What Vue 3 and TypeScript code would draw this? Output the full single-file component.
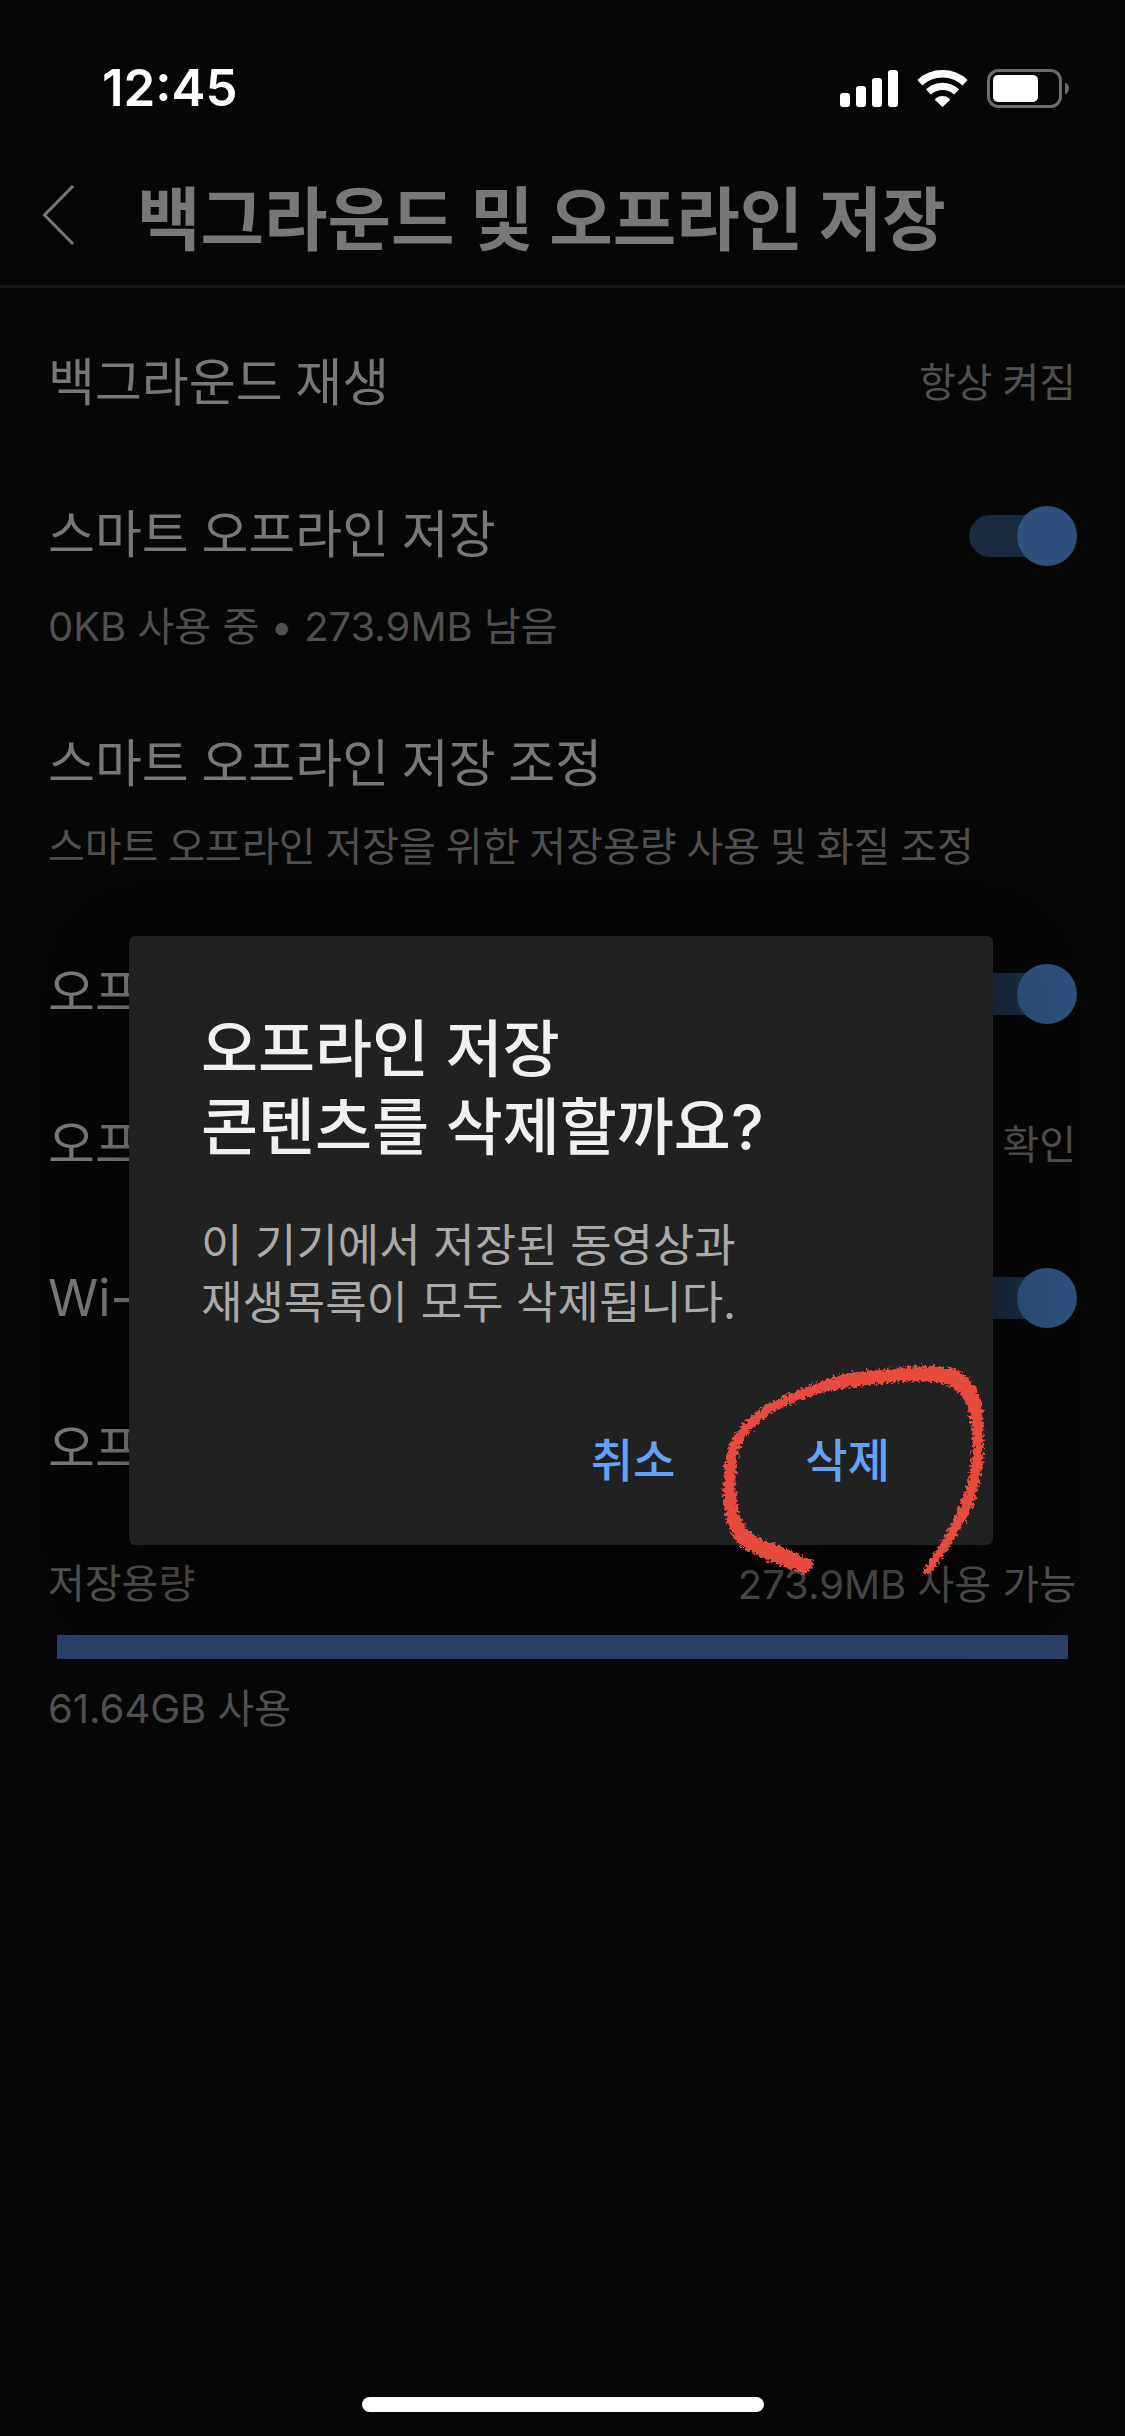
<script setup lang="ts">
import { ref } from 'vue'

interface SettingRow {
  id: string
  title: string
  value?: string
  toggle?: boolean
  detail?: string
  mixed?: boolean
  tight?: boolean
}

const rows = ref<SettingRow[]>([
  { id: 'background', title: '백그라운드 재생', value: '항상 켜짐' },
  {
    id: 'smart',
    title: '스마트 오프라인 저장',
    toggle: true,
    detail: '0KB 사용 중 • 273.9MB 남음',
    mixed: true,
  },
  {
    id: 'adjust',
    title: '스마트 오프라인 저장 조정',
    detail: '스마트 오프라인 저장을 위한 저장용량 사용 및 화질 조정',
    tight: true,
  },
  { id: 'recommend', title: '오프라인 저장', toggle: true },
  { id: 'quality', title: '오프라인', value: '확인' },
  { id: 'wifi', title: 'Wi-Fi', toggle: true, mixed: true },
  { id: 'delete', title: '오프라인 저장' },
])

const usedPercent = 100
const dialogOpen = ref(true)
</script>

<template>
  <div class="screen">
    <div class="status">
      <span class="clock">12:45</span>
      <div class="indicators">
        <svg class="signal" width="58" height="37" viewBox="0 0 58 37" aria-hidden="true">
          <rect x="0" y="23" width="10" height="14" rx="3" />
          <rect x="16" y="16" width="10" height="21" rx="3" />
          <rect x="32" y="8" width="10" height="29" rx="3" />
          <rect x="48" y="0" width="10" height="37" rx="3" />
        </svg>
        <svg class="wifi" width="51" height="37" viewBox="0 0 51 37" aria-hidden="true">
          <path d="M2.9 12.7A33.2 33.2 0 0 1 48.1 12.7" fill="none" stroke="#fff" stroke-width="7.5" />
          <path d="M11.4 21.9A20.7 20.7 0 0 1 39.6 21.9" fill="none" stroke="#fff" stroke-width="7.2" />
          <path d="M25.5 37L18.4 30.2Q17.6 29.2 18.8 28.2A11.3 11.3 0 0 1 32.2 28.2Q33.4 29.2 32.6 30.2Z" />
        </svg>
        <svg class="battery" width="82" height="39" viewBox="0 0 82 39" aria-hidden="true">
          <rect x="1.5" y="1.5" width="72" height="36" rx="10" fill="none" stroke="#6c6c6c" stroke-width="3" />
          <rect x="6" y="6" width="45" height="27" rx="5" />
          <path d="M78 13.5C80.6 14.5 82 17 82 19.5S80.6 24.5 78 25.5Z" fill="#6c6c6c" />
        </svg>
      </div>
    </div>

    <header class="header">
      <button class="back" type="button" aria-label="뒤로">
        <svg width="33" height="62" viewBox="0 0 33 62" aria-hidden="true">
          <path d="M31 2L2.5 31L31 60" fill="none" stroke="#787878" stroke-width="3" />
        </svg>
      </button>
      <h1>백그라운드 및 오프라인 저장</h1>
    </header>

    <main class="settings">
      <section v-for="row in rows" :key="row.id" class="row" :class="{ tight: row.tight }">
        <div class="line">
          <label
            v-if="row.toggle !== undefined"
            class="title"
            :class="{ mixed: row.mixed && !row.detail }"
            :for="row.id"
          >{{ row.title }}</label>
          <span v-else class="title">{{ row.title }}</span>
          <input
            v-if="row.toggle !== undefined"
            :id="row.id"
            v-model="row.toggle"
            class="switch"
            type="checkbox"
            role="switch"
          />
          <span v-else-if="row.value" class="note">{{ row.value }}</span>
        </div>
        <p v-if="row.detail" class="note detail" :class="{ mixed: row.mixed }">{{ row.detail }}</p>
      </section>

      <section class="storage">
        <div class="storage-labels">
          <span class="note">저장용량</span>
          <span class="note mixed">273.9MB 사용 가능</span>
        </div>
        <div class="bar"><div class="fill" :style="{ width: usedPercent + '%' }"></div></div>
        <p class="note mixed">61.64GB 사용</p>
      </section>
    </main>

    <div class="home"></div>

    <div v-if="dialogOpen" class="overlay">
      <div class="dialog mixed" role="dialog" aria-modal="true" aria-labelledby="dialog-title">
        <h2 id="dialog-title">오프라인 저장<br />콘텐츠를 삭제할까요?</h2>
        <p class="message">이 기기에서 저장된 동영상과<br />재생목록이 모두 삭제됩니다.</p>
        <div class="actions">
          <button type="button" @click="dialogOpen = false">취소</button>
          <button type="button" @click="dialogOpen = false">삭제</button>
        </div>
        <svg class="scribble" width="340" height="260" viewBox="0 0 1020 780" aria-hidden="true">
          <defs>
            <filter id="crayon" x="-5%" y="-5%" width="110%" height="110%">
              <feTurbulence type="fractalNoise" baseFrequency="0.11" numOctaves="3" seed="4" result="noise" />
              <feDisplacementMap in="SourceGraphic" in2="noise" scale="28" xChannelSelector="R" yChannelSelector="G" />
            </filter>
          </defs>
          <path
            filter="url(#crayon)"
            d="M378 668L350 655L310 636L262 612L225 603L185 580L155 543L141 500L136 440L138 380L147 325L165 290L190 262L240 222L280 200L320 182L400 157L450 147L500 139L600 127L700 123L740 125L770 134L798 150L815 168L830 195L840 230L848 280L849 330L843 380L825 455L800 520L760 595L730 645L700 695L716 706L765 640L810 567L835 525L850 490L868 430L877 380L880 300L880 240L877 195L868 165L855 140L835 115L810 95L780 84L750 79L700 78L640 82L560 89L480 97L400 121L330 146L250 182L210 207L180 232L150 263L130 292L115 325L106 360L99 450L102 500L110 545L130 590L148 612L170 630L230 660L290 683L345 702Z"
          />
        </svg>
      </div>
    </div>
  </div>
</template>

<style>
body {
  margin: 0;
  background: #060606;
}
</style>

<style scoped>
.screen {
  position: relative;
  box-sizing: border-box;
  min-height: 100vh;
  display: flex;
  flex-direction: column;
  background: #060606;
  color: #787878;
  font-family: Roboto, 'Noto Sans CJK KR', sans-serif;
}

.clock,
.mixed {
  font-family: Inter, 'Noto Sans CJK KR', sans-serif;
}

h1,
h2,
p {
  margin: 0;
}

.status {
  display: flex;
  align-items: center;
  justify-content: space-between;
  height: 88px;
  padding: 44px 56px 0 102px;
}

.clock {
  color: #fff;
  font-size: 51px;
  font-weight: 600;
  line-height: 60px;
}

.indicators {
  display: flex;
  align-items: center;
  gap: 19px;
  fill: #fff;
}

.header {
  box-sizing: border-box;
  display: flex;
  align-items: center;
  height: 156px;
  padding-top: 13px;
  border-bottom: 3px solid #151515;
}

.back {
  display: flex;
  flex: none;
  align-items: center;
  width: 137px;
  height: 100px;
  padding: 0 0 0 42px;
  border: 0;
  background: none;
}

h1 {
  font-family: 'Noto Sans CJK KR', sans-serif;
  font-size: 69px;
  font-weight: 700;
  line-height: 100px;
}

.settings {
  flex: 1;
  padding: 20px 49px 0 48px;
}

.row {
  padding-bottom: 1px;
}

.line {
  display: flex;
  align-items: center;
  justify-content: space-between;
  height: 151px;
}

.title {
  font-size: 51px;
  line-height: 76px;
}

.note {
  color: #505050;
  font-size: 40px;
  line-height: 60px;
}

.detail {
  margin-top: -14px;
  padding-bottom: 31px;
}

.tight .detail {
  margin-top: -22px;
  padding-bottom: 39px;
}

.switch {
  appearance: none;
  position: relative;
  display: flex;
  align-items: center;
  justify-content: flex-end;
  width: 108px;
  height: 60px;
  margin: 0 -1px 0 0;
}

.switch::before {
  content: '';
  position: absolute;
  left: 0;
  width: 90px;
  height: 42px;
  border-radius: 21px;
  background: #1a2b40;
}

.switch::after {
  content: '';
  position: relative;
  width: 60px;
  height: 60px;
  border-radius: 30px;
  background: #2d517c;
}

.storage {
  padding-top: 29px;
}

.storage-labels {
  display: flex;
  justify-content: space-between;
}

.bar {
  height: 24px;
  margin: 20px 8px 20px 9px;
}

.fill {
  height: 100%;
  background: #2a3f68;
}

.home {
  align-self: center;
  width: 402px;
  height: 15px;
  margin-bottom: 24px;
  border-radius: 8px;
  background: #fff;
}

.overlay {
  position: absolute;
  inset: 0;
  display: flex;
  align-items: center;
  justify-content: center;
  padding: 45px 132px 0 129px;
}

.dialog {
  position: relative;
  box-sizing: border-box;
  width: 100%;
  max-width: 864px;
  padding: 75px 56px 37px 72px;
  border-radius: 6px;
  background: #212121;
  box-shadow: 0 32px 80px rgba(0, 0, 0, 0.35);
}

h2 {
  color: #f1f1f1;
  font-size: 62px;
  font-weight: 500;
  line-height: 78px;
}

.message {
  margin-top: 50px;
  color: #aaa;
  font-size: 45px;
  line-height: 57px;
}

.actions {
  display: flex;
  justify-content: flex-end;
  gap: 36px;
  margin-top: 81px;
}

.actions button {
  padding: 0 47px;
  border: 0;
  background: none;
  color: #61a3f8;
  font-family: inherit;
  font-size: 46px;
  font-weight: 500;
  line-height: 96px;
}

.scribble {
  position: absolute;
  right: -37px;
  bottom: -55px;
  fill: #e84b3c;
  pointer-events: none;
}
</style>
